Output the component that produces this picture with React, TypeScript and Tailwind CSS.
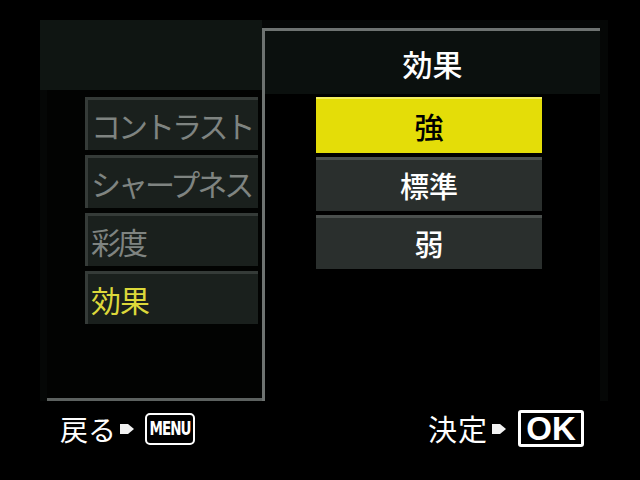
import React from 'react';

const jp = { fontFamily: '"Noto Sans CJK JP", "Noto Sans", sans-serif' };

const leftItems = [
  { label: 'コントラスト', active: false },
  { label: 'シャープネス', active: false },
  { label: '彩度', active: false },
  { label: '効果', active: true },
];

const options = [
  { label: '強', selected: true },
  { label: '標準', selected: false },
  { label: '弱', selected: false },
];

const Arrow = () => (
  <svg width="15" height="14" viewBox="0 0 15 14" className="shrink-0">
    <polygon points="0,2 8,2 14,7 8,12 0,12" fill="#f2f2f2" />
  </svg>
);

export default function App() {
  return (
    <div className="w-[640px] h-[480px] bg-black overflow-hidden" style={jp}>
      <div className="pt-[20px] pl-[40px]">
        <div className="w-[568px] h-[381px] flex bg-[#050706]">
          {/* parent menu */}
          <div className="w-[222px] flex flex-col">
            <div className="h-[70px] bg-[#0f1512]" />
            <div className="flex-1 flex flex-col gap-[5px] pt-[7px] pl-[45px] pr-[4px] ml-[7px] border-b-[3px] border-[#5c615f] bg-[#020302]">
              {leftItems.map((it) => (
                <div
                  key={it.label}
                  className="h-[53px] w-[173px] -ml-[7px] flex items-center pl-[3px] bg-[#1a201d] border-t-[3px] border-l-[3px] border-[#353b38] overflow-hidden whitespace-nowrap"
                >
                  <span
                    className={
                      it.active
                        ? 'text-[30px] leading-none text-[#dcd83a] tracking-[-1px]'
                        : 'text-[30px] leading-none text-[#7f8481] tracking-[-3px]'
                    }
                  >
                    {it.label}
                  </span>
                </div>
              ))}
            </div>
          </div>

          {/* popup */}
          <div className="w-[338px] mt-[8px] h-[373px] border-t-[3px] border-l-[3px] border-[#6e7371] bg-black flex flex-col">
            <div className="h-[63px] bg-[#0b100e] flex items-center justify-center">
              <span className="text-[30px] leading-none text-white font-medium">効果</span>
            </div>
            <div className="flex flex-col gap-[4px] pl-[51px] pt-[3px]">
              {options.map((o) => (
                <div
                  key={o.label}
                  className={
                    o.selected
                      ? 'w-[226px] h-[56px] flex items-center justify-center bg-[#e4dd08] border-t-[2px] border-[#f3ee60]'
                      : 'w-[226px] h-[54px] flex items-center justify-center bg-[#2a2f2d] border-t-[3px] border-[#4a4f4d]'
                  }
                >
                  <span
                    className={
                      o.selected
                        ? 'text-[29px] leading-none text-black font-medium'
                        : 'text-[29px] leading-none text-white font-medium'
                    }
                  >
                    {o.label}
                  </span>
                </div>
              ))}
            </div>
          </div>
        </div>
      </div>

      {/* footer */}
      <div className="flex items-center justify-between w-[640px] pl-[60px] pr-[56px] mt-[9px]">
        <div className="flex items-center">
          <span className="text-[28px] leading-none text-white">戻る</span>
          <span className="ml-[4px]"><Arrow /></span>
          <span className="ml-[10px] h-[32px] w-[50px] flex items-center justify-center border-2 border-white rounded-[5px]">
            <span
              className="text-white text-[15px] font-bold leading-none tracking-[-1px] scale-y-[1.35]"
              style={{ fontFamily: '"DejaVu Sans Condensed", "DejaVu Sans", sans-serif' }}
            >
              MENU
            </span>
          </span>
        </div>
        <div className="flex items-center">
          <span className="text-[29px] leading-none text-white tracking-[1px]">決定</span>
          <span className="ml-[4px]"><Arrow /></span>
          <span
            className="ml-[11px] h-[37px] w-[66px] flex items-center justify-center border-[3px] border-white rounded-[3px] text-white text-[33px] font-bold leading-none"
            style={{ fontFamily: '"Liberation Sans", Arial, sans-serif' }}
          >
            OK
          </span>
        </div>
      </div>
    </div>
  );
}
